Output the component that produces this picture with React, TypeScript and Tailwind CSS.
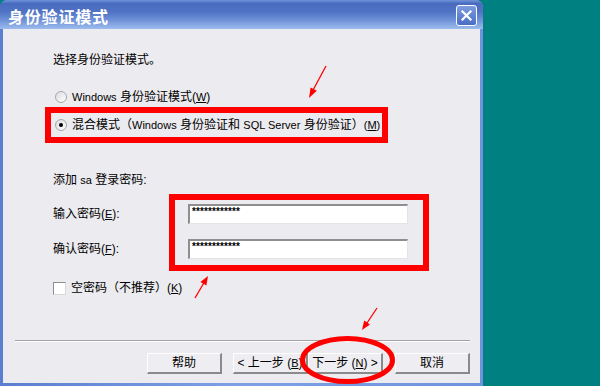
import React from "react";

const U = ({ children }: { children: React.ReactNode }) => <span className="underline underline-offset-[1px]">{children}</span>;
const L = ({ children }: { children: React.ReactNode }) => <span className="text-[11px]">{children}</span>;

const Btn = ({ children }: { children: React.ReactNode }) => (
  <div className="w-[75px] h-[21px] flex items-center justify-center bg-[#eeedf1] border-t border-l border-t-white border-l-white border-r-2 border-b-2 border-r-[#8a8a8a] border-b-[#8a8a8a] text-[12px] leading-none">
    {children}
  </div>
);

const Pwd = () => (
  <div className="w-[220px] h-[20px] bg-white border-t-2 border-l-2 border-t-[#8e8e8e] border-l-[#8e8e8e] border-r border-b border-r-[#e4e4e4] border-b-[#e4e4e4] pl-[2px] pt-[1px]">
    <span className="font-['Liberation_Sans',sans-serif] text-[10px] leading-[10px] font-bold tracking-[0.1px] block">************</span>
  </div>
);

export default function App() {
  return (
    <div className="w-[600px] h-[386px] bg-[#008080] relative overflow-hidden font-['Liberation_Sans','Noto_Sans_CJK_SC',sans-serif] text-black">
      {/* window */}
      <div className="w-[483px] h-[386px] flex flex-col rounded-t-[7px] bg-gradient-to-r from-[#5a7fcf] via-[#7ea1e4] to-[#6d93dd] overflow-hidden">
        <div className="h-[29px] shrink-0 flex items-center pl-[8px] pr-[6px] bg-[linear-gradient(to_bottom,#7093da_0%,#4a6cc0_12%,#4f72c4_40%,#6f92d8_70%,#9dbcee_100%)]">
          <span className="text-white font-bold text-[16px] leading-none tracking-[0.8px] pt-[2px] font-['Noto_Sans_CJK_SC',sans-serif]">身份验证模式</span>
          <div className="ml-auto w-[21px] h-[21px] rounded-[3px] border border-white bg-gradient-to-b from-[#7d9ce0] to-[#4a6dc6] flex items-center justify-center mt-[2px]">
            <svg width="13" height="13" viewBox="0 0 13 13">
              <path d="M2.5 2.5 L10.5 10.5 M10.5 2.5 L2.5 10.5" stroke="white" strokeWidth="2.2" strokeLinecap="square" />
            </svg>
          </div>
        </div>
        <div className="flex-1 mx-[3px] mb-[3px] bg-[#ecebef] flex flex-col text-[12px]">
          <div className="pl-[50px] pt-[23px] flex flex-col">
            <div className="h-[16px] leading-[16px]">选择身份验证模式。</div>
            <div className="h-[16px] mt-[21px] flex items-center">
              <div className="ml-[2px] w-[12px] h-[12px] rounded-full border border-[#a7a7ab] bg-gradient-to-br from-[#dcdcdc] to-white" />
              <span className="ml-[5px] leading-[16px]"><L>Windows</L> 身份验证模式(<U><L>W</L></U>)</span>
            </div>
            <div className="h-[16px] mt-[12px] flex items-center">
              <div className="ml-[2px] w-[12px] h-[12px] rounded-full border border-[#a7a7ab] bg-gradient-to-br from-[#dcdcdc] to-white flex items-center justify-center">
                <div className="w-[4px] h-[4px] rounded-full bg-black" />
              </div>
              <span className="ml-[5px] leading-[16px]">混合模式（<L>Windows</L> 身份验证和 <L>SQL Server</L> 身份验证）<L>(<U>M</U>)</L></span>
            </div>
            <div className="h-[16px] mt-[39px] leading-[16px]">添加 <L>sa</L> 登录密码:</div>
            <div className="mt-[16px] flex items-center">
              <div className="w-[135px] leading-[16px]">输入密码(<U><L>E</L></U>):</div>
              <Pwd />
            </div>
            <div className="mt-[15px] flex items-center">
              <div className="w-[135px] leading-[16px]">确认密码(<U><L>F</L></U>):</div>
              <Pwd />
            </div>
            <div className="h-[16px] mt-[21px] flex items-center">
              <div className="w-[13px] h-[13px] bg-white border-t border-l border-t-[#8e8e8e] border-l-[#8e8e8e] border-r border-b border-r-[#d8d8d8] border-b-[#d8d8d8]" />
              <span className="ml-[5px] leading-[16px]">空密码（不推荐）(<U><L>K</L></U>)</span>
            </div>
          </div>
          <div className="mt-[44px] ml-[12px] mr-[10px] border-t border-t-[#a2a2a6] border-b border-b-white" />
          <div className="mt-[11px] flex justify-end pr-[10px]">
            <Btn>帮助</Btn>
            <div className="w-[11px]" />
            <Btn>&lt; 上一步 (<U><L>B</L></U>)</Btn>
            <Btn>下一步 (<U><L>N</L></U>) &gt;</Btn>
            <div className="w-[12px]" />
            <Btn>取消</Btn>
          </div>
        </div>
      </div>

      {/* annotations */}
      <div className="absolute left-[45px] top-[107px] w-[343px] h-[36px] border-[6px] border-[#ff0000]" />
      <div className="absolute left-[169px] top-[194px] w-[260px] h-[77px] border-[6px] border-[#ff0000]" />
      <svg className="absolute left-0 top-0 pointer-events-none" width="600" height="386" viewBox="0 0 600 386">
        <ellipse cx="347.5" cy="360" rx="45" ry="21.5" fill="none" stroke="#ff0000" strokeWidth="5" />
        <line x1="326" y1="66" x2="312" y2="92" stroke="#ff0000" strokeWidth="1.3" />
        <polygon points="309,98 316.8,90.8 310.6,87.5" fill="#ff0000" />
        <line x1="195" y1="298" x2="205" y2="281" stroke="#ff0000" strokeWidth="1.3" />
        <polygon points="208,276 206.4,285.5 200.4,281.9" fill="#ff0000" />
        <line x1="377" y1="308" x2="365" y2="326" stroke="#ff0000" strokeWidth="1.3" />
        <polygon points="362,330 364.2,320.6 370,324.6" fill="#ff0000" />
      </svg>
    </div>
  );
}
